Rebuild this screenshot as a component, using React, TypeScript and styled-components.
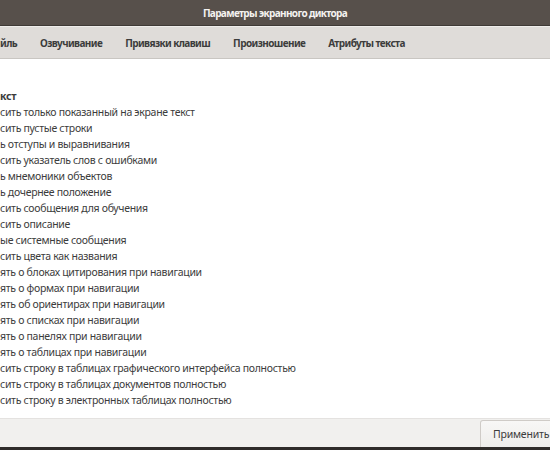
import React from "react";
import styled, { createGlobalStyle } from "styled-components";

const Global = createGlobalStyle`
  html, body { margin: 0; padding: 0; background: #ffffff; }
  body { font-family: "Noto Sans", "DejaVu Sans", sans-serif; }
  * { box-sizing: border-box; }
`;

const Window = styled.div`
  width: 550px;
  height: 450px;
  display: flex;
  flex-direction: column;
  overflow: hidden;
  background: #ffffff;
`;

const TitleBar = styled.div`
  height: 26px;
  flex: none;
  background: #57504b;
  border-bottom: 1px solid #3f3a36;
  display: flex;
  align-items: center;
  justify-content: center;
  color: #f4f2f0;
  font-weight: 700;
  font-size: 10px;
  letter-spacing: -0.65px;
`;

const TabBar = styled.div`
  height: 33px;
  flex: none;
  background: #dfdcd9;
  border-top: 1px solid #efedeb;
  border-bottom: 1px solid #c9c6c2;
  display: flex;
  align-items: center;
  gap: 23px;
  padding-top: 1px;
`;

const Tab = styled.div`
  flex: none;
  font-size: 10px;
  font-weight: 700;
  letter-spacing: -0.6px;
  color: #3c3c3c;
  white-space: nowrap;
`;

const Content = styled.div`
  flex: 1;
  padding-top: 29px;
  display: flex;
  flex-direction: column;
  border-bottom: 1px solid #e4e2e0;
`;

const Row = styled.div<{ $bold?: boolean }>`
  height: 16px;
  line-height: 16px;
  font-size: 10.5px;
  letter-spacing: -0.3px;
  font-weight: ${(p) => (p.$bold ? 700 : 400)};
  color: #3c3c3c;
  white-space: nowrap;
`;

const Footer = styled.div`
  height: 31px;
  flex: none;
  background: #f1f0ee;
  border-bottom: 3px solid #2f2c2a;
  display: flex;
  justify-content: flex-end;
  align-items: flex-end;
  padding-top: 4px;
`;

const Button = styled.div`
  width: 72px;
  height: 27px;
  margin-right: -2px;
  border: 1px solid #cfcbc7;
  border-bottom: none;
  border-radius: 3px 0 0 0;
  background: linear-gradient(#f8f7f6, #eeedeb);
  display: flex;
  align-items: center;
  padding-left: 12px;
  font-size: 10.5px;
  letter-spacing: -0.2px;
  color: #3c3c3c;
  white-space: nowrap;
`;

const rows = [
  "сить только показанный на экране текст",
  "сить пустые строки",
  "ь отступы и выравнивания",
  "сить указатель слов с ошибками",
  "ь мнемоники объектов",
  "ь дочернее положение",
  "сить сообщения для обучения",
  "сить описание",
  "ые системные сообщения",
  "сить цвета как названия",
  "ять о блоках цитирования при навигации",
  "ять о формах при навигации",
  "ять об ориентирах при навигации",
  "ять о списках при навигации",
  "ять о панелях при навигации",
  "ять о таблицах при навигации",
  "сить строку в таблицах графического интерфейса полностью",
  "сить строку в таблицах документов полностью",
  "сить строку в электронных таблицах полностью",
];

const tabs = ["йль", "Озвучивание", "Привязки клавиш", "Произношение", "Атрибуты текста"];

export default function App() {
  return (
    <>
      <Global />
      <Window>
        <TitleBar>Параметры экранного диктора</TitleBar>
        <TabBar>
          {tabs.map((t) => (
            <Tab key={t}>{t}</Tab>
          ))}
        </TabBar>
        <Content>
          <Row $bold>кст</Row>
          {rows.map((r) => (
            <Row key={r}>{r}</Row>
          ))}
        </Content>
        <Footer>
          <Button>Применить</Button>
        </Footer>
      </Window>
    </>
  );
}
